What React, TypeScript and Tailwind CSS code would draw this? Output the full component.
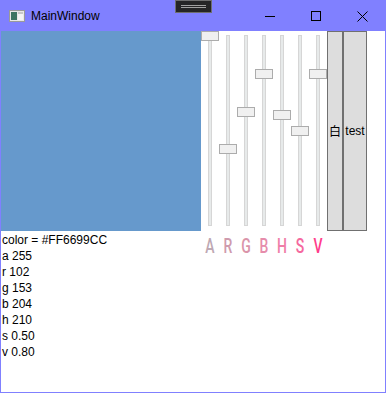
import React from 'react';

const sliders = [
  { label: 'A', top: 0, color: 'text-[#bea8b3]' },
  { label: 'R', top: 113, color: 'text-[#cf9bad]' },
  { label: 'G', top: 76, color: 'text-[#da94a9]' },
  { label: 'B', top: 38, color: 'text-[#e68cab]' },
  { label: 'H', top: 79, color: 'text-[#ef7ea7]' },
  { label: 'S', top: 95, color: 'text-[#f5689e]' },
  { label: 'V', top: 38, color: 'text-[#ff3d8b]' },
];

const lines = ['color = #FF6699CC', 'a 255', 'r 102', 'g 153', 'b 204', 'h 210', 's 0.50', 'v 0.80'];

const App = () => {
  return (
    <div className="relative w-[386px] h-[393px] border border-[#8080ff] bg-white flex flex-col font-['Liberation_Sans',sans-serif] text-black">
      {/* Title bar */}
      <div className="h-[30px] bg-[#8080ff] flex items-center shrink-0">
        <svg className="ml-[8px]" width="16" height="12" viewBox="0 0 16 12">
          <rect x="0.5" y="0.5" width="15" height="11" fill="#e8e8e8" stroke="#9a9a9a" />
          <rect x="2" y="2" width="6" height="8" fill="#3d7563" />
          <rect x="9" y="2" width="5" height="8" fill="#f4f4f4" />
          <rect x="9" y="2" width="5" height="2" fill="#c8c8c8" />
        </svg>
        <span className="ml-[6px] text-[12px] leading-none">MainWindow</span>
        <div className="ml-auto flex h-full">
          <div className="w-[46px] h-full flex items-center justify-center">
            <div className="w-[10px] h-px bg-black" />
          </div>
          <div className="w-[46px] h-full flex items-center justify-center">
            <div className="w-[10px] h-[10px] border border-black" />
          </div>
          <div className="w-[46px] h-full flex items-center justify-center">
            <svg width="11" height="11" viewBox="0 0 11 11">
              <path d="M0.5 0.5L10.5 10.5M10.5 0.5L0.5 10.5" stroke="#000" strokeWidth="1" />
            </svg>
          </div>
        </div>
      </div>

      {/* debug toolbar overlay */}
      <div className="absolute left-[174px] top-[-1px] w-[37px] h-[13px] bg-[#252526] border border-[#6e6e6e] flex flex-col items-center justify-center gap-[1px]">
        <div className="w-[25px] h-px bg-[#a0a0a0]" />
        <div className="w-[25px] h-px bg-[#a0a0a0]" />
      </div>

      {/* Top row */}
      <div className="flex h-[200px] shrink-0">
        <div className="w-[200px] h-full bg-[#6699cc]" />
        {sliders.map((s) => (
          <div key={s.label} className="relative w-[18px] h-full flex justify-center pt-[4px] pb-[5px]">
            <div className="w-[4px] h-full bg-[#e7eaea] border border-[#d6d6d6]" />
            <div
              className="absolute left-0 w-[18px] h-[10px] bg-[#f0f0f0] border border-[#acacac]"
              style={{ top: s.top }}
            />
          </div>
        ))}
        <div className="w-[16px] h-full bg-[#dddddd] border border-[#707070] flex items-center justify-center text-[12px] font-['Noto_Sans_CJK_SC',sans-serif]">
          白
        </div>
        <div className="w-[24px] h-full bg-[#dddddd] border border-[#707070] flex items-center justify-center text-[12px]">
          test
        </div>
      </div>

      {/* Bottom row */}
      <div className="flex">
        <div className="w-[200px] pt-[1px] pl-[1px] text-[12px] leading-[16px]">
          {lines.map((l) => (
            <div key={l}>{l}</div>
          ))}
        </div>
        <div className="flex mt-[5px]">
          {sliders.map((s) => (
            <div
              key={s.label}
              className={`w-[18px] text-center text-[20px] leading-[20px] font-medium font-['Roboto',sans-serif] scale-x-[0.7] ${s.color}`}
            >
              {s.label}
            </div>
          ))}
        </div>
      </div>
    </div>
  );
};

export default App;
